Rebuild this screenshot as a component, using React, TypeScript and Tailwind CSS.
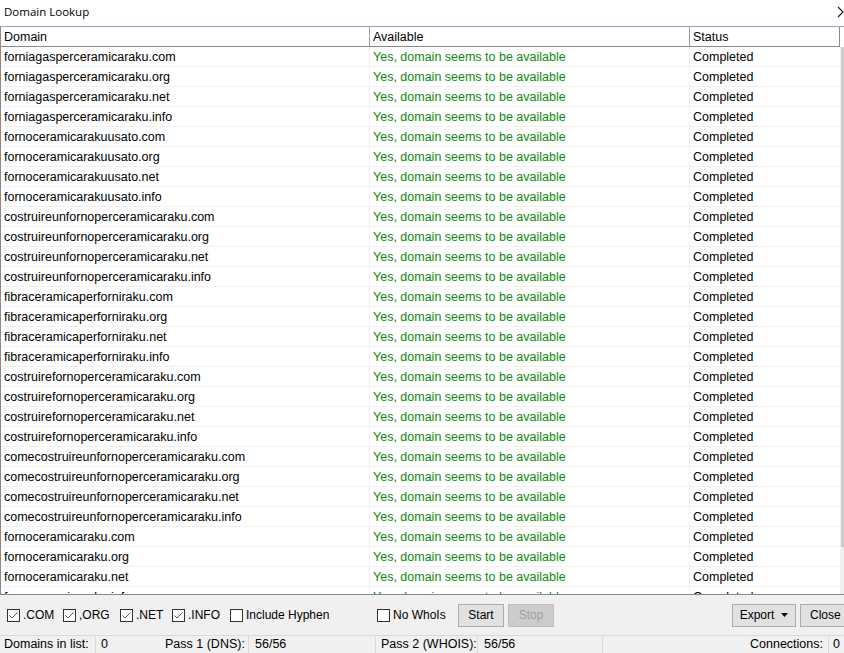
import React from "react";

const bases = [
  "forniagasperceramicaraku",
  "fornoceramicarakuusato",
  "costruireunfornoperceramicaraku",
  "fibraceramicaperforniraku",
  "costruirefornoperceramicaraku",
  "comecostruireunfornoperceramicaraku",
  "fornoceramicaraku",
];
const tlds = [".com", ".org", ".net", ".info"];
const rows = bases.flatMap((b) => tlds.map((t) => b + t));

function Check({ checked, label, w }: { checked?: boolean; label: string; w: string }) {
  return (
    <div className={`flex items-center ${w}`}>
      <div className="w-[13px] h-[13px] border border-[#333] bg-white flex items-center justify-center shrink-0">
        {checked && (
          <svg width="11" height="11" viewBox="0 0 11 11">
            <polyline points="1.5,5.5 4,8 9.5,2.5" fill="none" stroke="#555" strokeWidth="1" />
          </svg>
        )}
      </div>
      <span className="ml-[3px] whitespace-nowrap">{label}</span>
    </div>
  );
}

export default function App() {
  return (
    <div className="w-[844px] h-[653px] bg-[#f0f0f0] flex flex-col overflow-hidden text-[12px] text-black font-['Liberation_Sans',Arial,sans-serif]">
      {/* title */}
      <div className="h-[26px] bg-white flex items-center justify-between pl-[4px] pb-[2px] shrink-0">
        <span className="font-['Open_Sans',sans-serif] text-[11.5px]">Domain Lookup</span>
        <svg width="8" height="12" viewBox="0 0 8 12">
          <polyline points="2,1 7,6 2,11" fill="none" stroke="#222" strokeWidth="1.2" />
        </svg>
      </div>

      {/* list */}
      <div className="h-[569px] shrink-0 flex border-t border-t-[#8aa6c4] border-l border-l-[#8a8a8a] border-b border-b-[#8a8a8a] bg-white overflow-hidden text-[12.5px]">
        <div className="w-[839px] shrink-0 flex flex-col overflow-hidden">
          <div className="h-[20px] shrink-0 flex border-b border-b-[#8a8a8a] border-r border-r-[#8a8a8a]">
            <div className="w-[369px] pl-[3px] pt-[2px] flex items-center border-r border-r-[#a0a0a0]">Domain</div>
            <div className="w-[320px] pl-[3px] pt-[2px] flex items-center border-r border-r-[#a0a0a0]">Available</div>
            <div className="flex-1 pl-[3px] pt-[2px] flex items-center">Status</div>
          </div>
          {rows.map((d) => (
            <div key={d} className="h-[20px] shrink-0 flex border-b border-b-[#f0f0f0]">
              <div className="w-[369px] pl-[3px] pt-[2px] flex items-center border-r border-r-[#f0f0f0]">{d}</div>
              <div className="w-[320px] pl-[3px] pt-[2px] flex items-center border-r border-r-[#f0f0f0] text-[#0b8a0b]">
                Yes, domain seems to be available
              </div>
              <div className="flex-1 pl-[3px] pt-[2px] flex items-center">Completed</div>
            </div>
          ))}
        </div>
        <div className="flex-1 flex flex-col bg-[#f0f0f0]">
          <div className="h-[20px] bg-white" />
          <div className="h-[500px] ml-[1px] bg-[#cdcdcd]" />
        </div>
      </div>

      {/* controls */}
      <div className="h-[40px] shrink-0 flex items-center pl-[7px] overflow-hidden">
        <Check checked label=".COM" w="w-[56px]" />
        <Check checked label=",ORG" w="w-[57px]" />
        <Check checked label=".NET" w="w-[52px]" />
        <Check checked label=".INFO" w="w-[58px]" />
        <Check label="Include Hyphen" w="w-[147px]" />
        <Check label="No WhoIs" w="w-[81px]" />
        <button className="w-[46px] h-[23px] shrink-0 border border-[#adadad] bg-[#e1e1e1]">Start</button>
        <button className="w-[46px] h-[23px] shrink-0 ml-[4px] border border-[#bfbfbf] bg-[#cccccc] text-[#a0a0a0]">Stop</button>
        <div className="flex-1" />
        <button className="w-[64px] h-[23px] shrink-0 border border-[#adadad] bg-[#e1e1e1] flex items-center justify-center gap-[7px]">
          <span>Export</span>
          <svg width="7" height="4" viewBox="0 0 7 4">
            <polygon points="0,0 7,0 3.5,4" fill="#000" />
          </svg>
        </button>
        <button className="w-[60px] h-[23px] shrink-0 ml-[4px] mr-[-16px] border border-[#adadad] bg-[#e1e1e1] text-left pl-[9px]">Close</button>
      </div>

      {/* status */}
      <div className="h-[18px] shrink-0 flex border-t border-t-[#dadada] whitespace-nowrap text-[12.5px]">
        <div className="w-[95px] pl-[4px] flex items-center">Domains in list:</div>
        <div className="w-[65px] pl-[5px] flex items-center border-l border-l-[#dadada]">0</div>
        <div className="w-[88px] pl-[5px] flex items-center">Pass 1 (DNS):</div>
        <div className="w-[127px] pl-[6px] flex items-center border-l border-l-[#dadada]">56/56</div>
        <div className="w-[102px] pl-[5px] flex items-center border-l border-l-[#dadada]">Pass 2 (WHOIS):</div>
        <div className="w-[125px] pl-[6px] flex items-center border-l border-l-[#dadada]">56/56</div>
        <div className="w-[226px] pr-[5px] flex items-center justify-end border-l border-l-[#dadada]">Connections:</div>
        <div className="flex-1 pl-[4px] flex items-center border-l border-l-[#dadada]">0</div>
      </div>
    </div>
  );
}
